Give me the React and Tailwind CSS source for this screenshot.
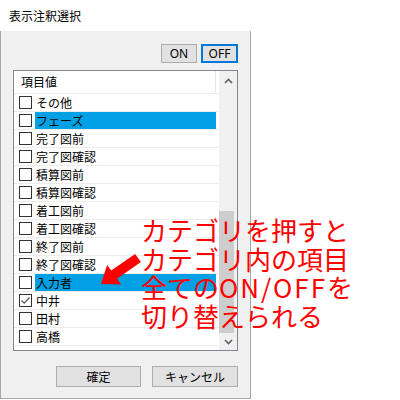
import React from "react";

const rows = [
  { label: "その他" },
  { label: "フェーズ", sel: true },
  { label: "完了図前" },
  { label: "完了図確認" },
  { label: "積算図前" },
  { label: "積算図確認" },
  { label: "着工図前" },
  { label: "着工図確認" },
  { label: "終了図前" },
  { label: "終了図確認" },
  { label: "入力者", sel: true },
  { label: "中井", checked: true },
  { label: "田村" },
  { label: "高橋" },
];

const jp = { fontFamily: '"Noto Sans CJK JP", "Noto Sans", sans-serif' };

function Row({ label, sel, checked }) {
  return (
    <div className="flex h-[18px] items-stretch border-b border-[#ececec]">
      <div className="flex w-[21px] shrink-0 items-center pl-[5px]">
        <div className="flex h-[13px] w-[13px] items-center justify-center border border-[#333333] bg-white">
          {checked && (
            <svg width="11" height="11" viewBox="0 0 11 11">
              <path d="M1.5 5.5 L4.2 8.2 L9.5 2.5" fill="none" stroke="#555" strokeWidth="1.2" />
            </svg>
          )}
        </div>
      </div>
      <div
        className={`flex w-[181px] items-center pl-[1px] text-[12px] leading-none ${
          sel ? "bg-[#00a0e4] text-black" : "text-black"
        }`}
      >
        {label}
      </div>
    </div>
  );
}

export default function App() {
  return (
    <div className="relative h-[400px] w-[400px] overflow-hidden bg-white" style={jp}>
      <div className="flex h-[399px] w-[251px] flex-col">
        <div className="flex h-[31px] items-center pl-[9px] text-[12px] text-black">
          表示注釈選択
        </div>
        <div className="flex flex-1 flex-col border-x border-b border-[#a6a6a6] bg-[#f0f0f0] pl-[12px] pr-[12px]">
          <div className="mt-[13px] flex justify-end gap-[4px]">
            <div
              className="flex h-[19px] w-[36px] items-center justify-center border border-[#adadad] bg-[#e1e1e1] text-[12px] text-black"
              style={{ fontFamily: '"Noto Sans", sans-serif' }}
            >
              ON
            </div>
            <div
              className="flex h-[19px] w-[37px] items-center justify-center border-2 border-[#0078d7] bg-[#e1e1e1] text-[12px] text-black"
              style={{ fontFamily: '"Noto Sans", sans-serif' }}
            >
              OFF
            </div>
          </div>
          <div className="mt-[7px] flex h-[281px] border border-[#828790] bg-white">
            <div className="flex w-[205px] flex-col">
              <div className="flex h-[23px] border-b border-[#ececec]">
                <div className="flex w-[201px] items-center pl-[7px] text-[12px] leading-none text-black">
                  項目値
                </div>
                <div className="w-px bg-[#e5e5e5]" />
              </div>
              {rows.map((r) => (
                <Row key={r.label} {...r} />
              ))}
            </div>
            <div className="flex w-[17px] flex-1 flex-col bg-[#f0f0f0]">
              <div className="flex h-[20px] items-center justify-center">
                <svg width="9" height="6" viewBox="0 0 9 6">
                  <path d="M1 5 L4.5 1.5 L8 5" fill="none" stroke="#606060" strokeWidth="1.6" />
                </svg>
              </div>
              <div className="mt-[120px] h-[122px] w-[15px] bg-[#cdcdcd]" />
              <div className="flex flex-1 items-center justify-center">
                <svg width="9" height="6" viewBox="0 0 9 6">
                  <path d="M1 1 L4.5 4.5 L8 1" fill="none" stroke="#606060" strokeWidth="1.6" />
                </svg>
              </div>
            </div>
          </div>
          <div className="mt-[15px] flex justify-end gap-[11px]">
            <div className="flex h-[21px] w-[85px] items-center justify-center border border-[#adadad] bg-[#e1e1e1] text-[12px] text-black">
              確定
            </div>
            <div className="flex h-[21px] w-[86px] items-center justify-center border border-[#adadad] bg-[#e1e1e1] text-[12px] text-black">
              キャンセル
            </div>
          </div>
        </div>
      </div>

      <svg className="absolute left-0 top-0" width="400" height="400" viewBox="0 0 400 400">
        <polygon
          points="140.9,262.1 135.1,253.9 111.2,270.6 107.1,264.9 101,284 121.1,284.5 117,278.8"
          fill="#ff0000"
        />
      </svg>

      <div className="absolute left-[141px] top-[216px] text-[26px] leading-[28.5px] text-[#ff0000]">
        <div>カテゴリを押すと</div>
        <div>カテゴリ内の項目</div>
        <div>
          全ての<span className="tracking-[2px]">ON/OFF</span>を
        </div>
        <div>切り替えられる</div>
      </div>
    </div>
  );
}
